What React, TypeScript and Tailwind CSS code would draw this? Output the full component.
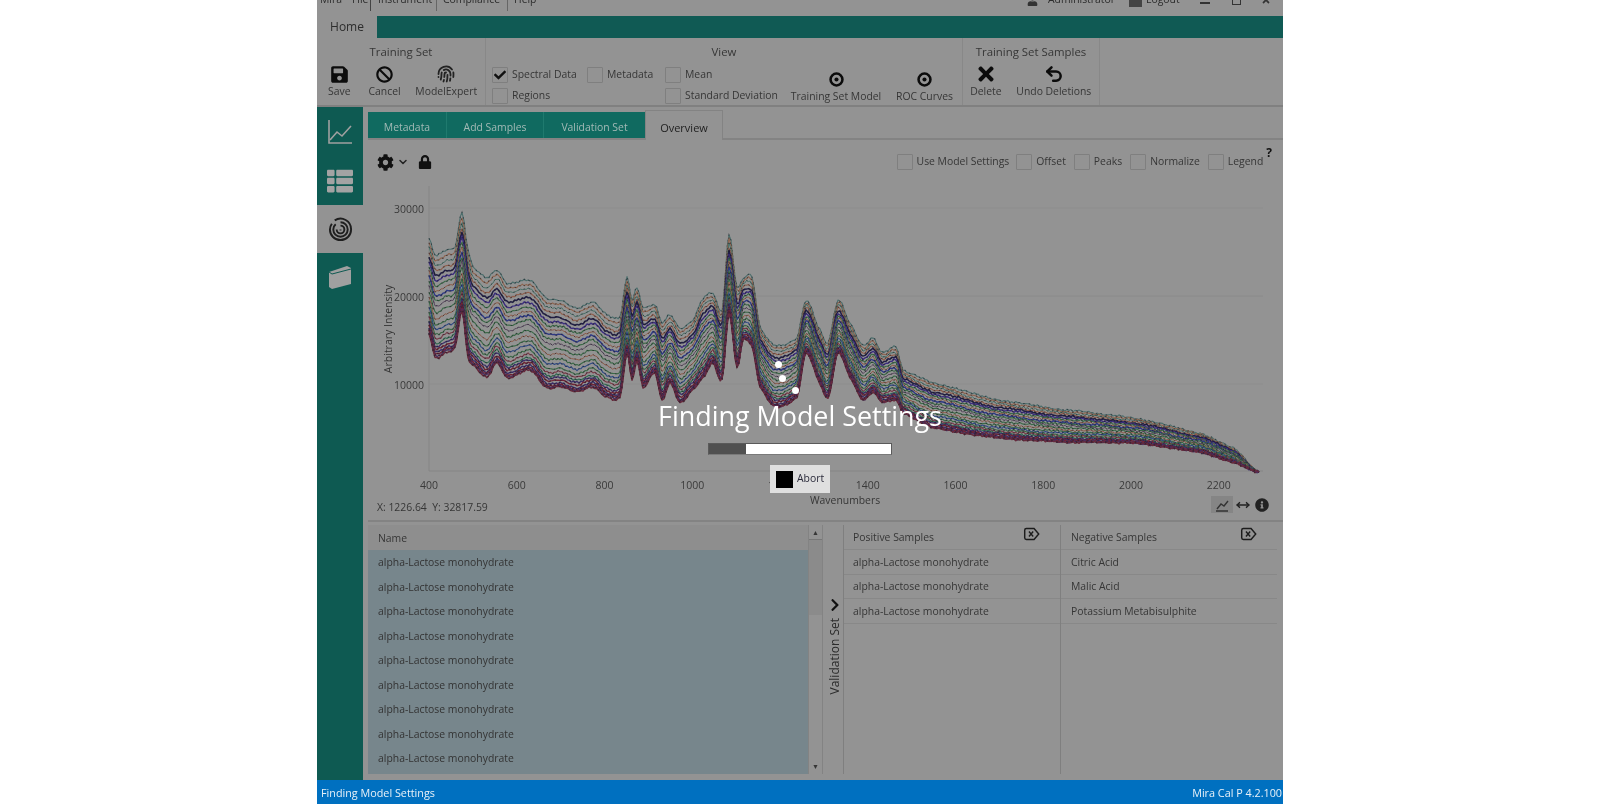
import React from "react";
import { FaSave, FaBan, FaTimes, FaLock, FaThList, FaInfoCircle, FaUser, FaCheck, FaChevronRight, FaCog } from "react-icons/fa";
import { Undo2, ChevronDown, Fingerprint, MoveHorizontal } from "lucide-react";

const env: [number, number, number][] = [
  [429,238,333],[435,255,357],[447,250,352],[455,247,348],[462,213,310],[468,250,357],[473,267,365],[487,278,377],[497,270,363],[507,283,378],[530,280,370],[547,298,388],[560,300,387],[577,308,392],[593,302,387],[607,315,397],[620,317,397],[627,277,353],[632,300,380],[637,288,360],[643,308,387],[655,305,373],[662,323,400],[670,315,383],[680,328,403],[693,320,390],[703,298,378],[713,293,363],[722,310,380],[729,235,313],[737,287,368],[743,278,340],[752,277,347],[760,327,387],[775,345,407],[797,338,397],[806,300,353],[820,330,383],[828,343,398],[838,300,353],[850,323,377],[863,345,400],[873,338,392],[882,352,402],[896,347,400],[903,370,413],[933,383,428],[1000,400,438],[1067,410,442],[1133,418,443],[1200,433,452],[1233,448,462],[1259,472,472],
];

const traces: [number, string, number][] = [
  [0, "#4d6f6d", 1.1], [0.05, "#8f6650", 1.1], [0.1, "#4a7268", 1], [0.15, "#8f5d4a", 1.1], [0.2, "#221f45", 1.5], [0.25, "#3d2f80", 1.4],
  [0.3, "#3b6a47", 1.1], [0.35, "#8f5d4a", 1], [0.4, "#2f3a85", 1.4], [0.45, "#3b6a47", 1.1], [0.5, "#5a4a60", 1], [0.56, "#3b6a47", 1.1],
  [0.62, "#8f5d4a", 1], [0.68, "#3b6a47", 1.1], [0.73, "#2f4a85", 1.1], [0.78, "#3b6a47", 1.1], [0.82, "#7a3a48", 1.1], [0.86, "#2f6a50", 1.1],
  [0.89, "#3d2f6a", 1.3], [0.92, "#702536", 1.4], [0.95, "#3d2f68", 1.4], [0.97, "#6e2436", 1.5], [0.985, "#4a3062", 1.4], [1, "#662a3c", 1.5],
];

function buildPath(t: number, index: number) {
  const pts = env.map(([x, a, b]) => [x, a + (b - a) * t]);
  const parts: string[] = [];
  for (let i = 0; i < pts.length - 1; i++) {
    const p0 = pts[Math.max(i - 1, 0)];
    const p1 = pts[i];
    const p2 = pts[i + 1];
    const p3 = pts[Math.min(i + 2, pts.length - 1)];
    const steps = Math.max(2, Math.round((p2[0] - p1[0]) / 2));
    for (let s = 0; s < steps; s++) {
      const u = s / steps;
      const u2 = u * u;
      const u3 = u2 * u;
      const m1 = (p2[1] - p0[1]) * 0.35;
      const m2 = (p3[1] - p1[1]) * 0.35;
      const y = (2 * u3 - 3 * u2 + 1) * p1[1] + (u3 - 2 * u2 + u) * m1 + (-2 * u3 + 3 * u2) * p2[1] + (u3 - u2) * m2;
      const x = p1[0] + (p2[0] - p1[0]) * u;
      const noise = Math.sin(x * 1.7 + index * 2.3) * 0.7 + Math.sin(x * 0.61 + index) * 0.5 + Math.sin(x * 3.3 + index * 5.1) * 0.4;
      parts.push(`${x.toFixed(1)},${(y + noise).toFixed(1)}`);
    }
  }
  parts.push("1259,472");
  return "M" + parts.join("L");
}

const yTicks: [string, number][] = [["30000", 208], ["20000", 296], ["10000", 384]];
const xTicks = ["400", "600", "800", "1000", "1200", "1400", "1600", "1800", "2000", "2200"];

function Chart() {
  return (
    <svg viewBox="368 176 915 316" className="block w-[915px] h-[316px]">
      {yTicks.map(([l, y]) => (
        <g key={l}>
          <line x1="429" x2="1263" y1={y} y2={y} stroke="#8a8a8a" strokeWidth={y === 296 ? 1 : 0.6} />
          <text x="424" y={y + 5} textAnchor="end" fontSize="10.5" fill="#3a3a3a">{l}</text>
        </g>
      ))}
      <line x1="429" x2="429" y1="186" y2="471" stroke="#858585" />
      <line x1="429" x2="1263" y1="471" y2="471" stroke="#858585" />
      {xTicks.map((l, i) => (
        <text key={l} x={429 + i * 87.75} y="489" textAnchor="middle" fontSize="10.5" fill="#3a3a3a">{l}</text>
      ))}
      <text transform="translate(392 329) rotate(-90)" textAnchor="middle" fontSize="10.5" fill="#333">Arbitrary Intensity</text>
      {traces.map(([t, c, w], i) => {
        const d = buildPath(t, i);
        return (
          <g key={i}>
            <path d={d} fill="none" stroke={c} strokeWidth={w} strokeLinejoin="round" />
            <path d={d} fill="none" stroke="#1c1c24" strokeOpacity="0.55" strokeWidth={w} strokeDasharray="1.5 4" />
          </g>
        );
      })}
    </svg>
  );
}

function Check({ checked }: { checked?: boolean }) {
  return (
    <span className="flex items-center justify-center w-4 h-4 shrink-0 border border-[#7f7f7f] rounded-[1px]">
      {checked && <FaCheck className="text-[#111] text-[12px]" />}
    </span>
  );
}

function Labeled({ label, checked, className }: { label: string; checked?: boolean; className?: string }) {
  return (
    <div className={"flex items-center gap-[4px] " + (className ?? "")}>
      <Check checked={checked} />
      <span className="whitespace-nowrap">{label}</span>
    </div>
  );
}

function Target() {
  return (
    <svg viewBox="0 0 20 20" className="w-[17px] h-[17px]">
      <circle cx="10" cy="10" r="7" fill="none" stroke="#0c0c0c" strokeWidth="3" />
      <circle cx="10" cy="10" r="2.4" fill="#0c0c0c" />
    </svg>
  );
}

function RibbonButton({ icon, label, className }: { icon: React.ReactNode; label: string; className: string }) {
  return (
    <div className={"flex flex-col items-center " + className}>
      <div className="h-[18px] flex items-center justify-center">{icon}</div>
      <span className="whitespace-nowrap leading-[16px]">{label}</span>
    </div>
  );
}

function TagX() {
  return (
    <svg viewBox="0 0 20 16" className="w-[17px] h-[14px]">
      <path d="M4 1.5H13L18.5 8L13 14.5H4Q2 14.5 2 12.5V3.5Q2 1.5 4 1.5Z" fill="none" stroke="#1c1c1c" strokeWidth="1.7" />
      <path d="M7 5L12 11M12 5L7 11" stroke="#1c1c1c" strokeWidth="1.6" />
    </svg>
  );
}

function Sidebar() {
  return (
    <div className="w-[46px] shrink-0 bg-[#0e5a52] flex flex-col">
      <div className="h-[49px] flex items-center justify-center">
        <svg viewBox="0 0 26 26" className="w-[26px] h-[26px]" fill="none" stroke="#a0a0a0" strokeWidth="1.6">
          <path d="M2 1V24H25" />
          <path d="M3 21L10 13L15 17L24 7" />
        </svg>
      </div>
      <div className="h-[49px] flex items-center justify-center">
        <FaThList className="text-[#a3a3a3] text-[26px]" />
      </div>
      <div className="h-[48px] flex items-center justify-center bg-[#939393]">
        <svg viewBox="0 0 26 26" className="w-[25px] h-[25px]" fill="none" stroke="#1f1f1f" strokeWidth="2">
          <path d="M7 3.5A11 11 0 0 1 24 13A11 11 0 0 1 13 24A11 11 0 0 1 2 13A11 11 0 0 1 4 7" />
          <path d="M13 5.5A7.5 7.5 0 0 1 20.5 13A7.5 7.5 0 0 1 13 20.5A7.5 7.5 0 0 1 5.5 13A7 7 0 0 1 8 7.5" />
          <path d="M13 9A4 4 0 0 1 17 13A4 4 0 0 1 13 17A4 4 0 0 1 9 13" />
          <path d="M13 13V14" />
        </svg>
      </div>
      <div className="h-[48px] flex items-center justify-center">
        <svg viewBox="0 0 26 26" className="w-[26px] h-[26px]">
          <path d="M2 8L20 2L24 4V20L5 25L2 23Z" fill="#a0a0a0" />
          <path d="M2 8L5 10L24 5" stroke="#0e5a52" strokeWidth="1" fill="none" />
        </svg>
      </div>
    </div>
  );
}

const leftRows = Array.from({ length: 9 });
const rightRows = [
  ["alpha-Lactose monohydrate", "Citric Acid"],
  ["alpha-Lactose monohydrate", "Malic Acid"],
  ["alpha-Lactose monohydrate", "Potassium Metabisulphite"],
];

export default function App() {
  return (
    <div className="w-full h-[806px] bg-white pl-[317px] overflow-hidden">
      <div className="relative w-[966px] h-[804px] flex flex-col bg-[#939393] text-[#363636] text-[10.4px] font-['Open_Sans',sans-serif] blur-[0.7px]">
        {/* title / menu */}
        <div className="h-[16px] overflow-hidden shrink-0">
          <div className="-mt-[8px] h-[16px] flex items-center pl-[3px] pr-[12px] text-[#2c2c2c]">
            <span className="w-[32px]">Mira</span>
            <span className="w-[18px]">File</span>
            <span className="w-px h-[22px] bg-[#444] mr-[7px]" />
            <span className="w-[52px]">Instrument</span>
            <span className="w-px h-[22px] bg-[#666] mx-[6px]" />
            <span className="w-[58px]">Compliance</span>
            <span className="w-px h-[22px] bg-[#666] mx-[6px]" />
            <span>Help</span>
            <FaUser className="ml-auto mr-[10px] text-[#333] text-[11px]" />
            <span className="w-[70px]">Administrator</span>
            <span className="w-[13px] h-[13px] bg-[#444] ml-[11px] mr-[4px]" />
            <span className="w-[46px]">Logout</span>
            <span className="w-[10px] h-[2px] mt-[6px] bg-[#333] mx-[8px]" />
            <span className="w-[9px] h-[9px] border border-[#333] ml-[14px]" />
            <FaTimes className="ml-[20px] text-[#333] text-[10px]" />
          </div>
        </div>
        {/* ribbon tab bar */}
        <div className="h-[22px] shrink-0 flex bg-[#105a54]">
          <div className="w-[60px] bg-[#939393] flex items-center justify-center text-[12px] text-[#2d2d2d]">Home</div>
        </div>
        {/* ribbon */}
        <div className="h-[69px] shrink-0 flex border-b-2 border-[#808080]">
          <div className="w-[169px] border-r border-[#888] flex flex-col">
            <div className="h-[27px] flex items-center justify-center text-[11.4px]">Training Set</div>
            <div className="flex">
              <RibbonButton className="w-[45px]" label="Save" icon={<FaSave className="text-[#0c0c0c] text-[19px]" />} />
              <RibbonButton className="w-[46px]" label="Cancel" icon={<FaBan className="text-[#0c0c0c] text-[17px]" />} />
              <RibbonButton className="w-[78px]" label="ModelExpert" icon={<Fingerprint className="text-[#222] w-[18px] h-[18px]" strokeWidth={2.4} />} />
            </div>
          </div>
          <div className="w-[477px] border-r border-[#888] flex flex-col">
            <div className="h-[28px] flex items-center justify-center text-[11.4px]">View</div>
            <div className="flex pl-[6px]">
              <div className="w-[298px] grid grid-cols-[95px_78px_125px] gap-y-[4px]">
                <Labeled checked label="Spectral Data" />
                <Labeled label="Metadata" />
                <Labeled label="Mean" />
                <Labeled label="Regions" />
                <span />
                <Labeled label="Standard Deviation" />
              </div>
              <div className="flex mt-[4px]">
                <RibbonButton className="w-[92px]" label="Training Set Model" icon={<Target />} />
                <RibbonButton className="w-[85px]" label="ROC Curves" icon={<Target />} />
              </div>
            </div>
          </div>
          <div className="w-[137px] border-r border-[#888] flex flex-col">
            <div className="h-[27px] flex items-center justify-center text-[11.4px]">Training Set Samples</div>
            <div className="flex">
              <RibbonButton className="w-[46px]" label="Delete" icon={<FaTimes className="text-[#0c0c0c] text-[22px]" />} />
              <RibbonButton className="w-[91px]" label="Undo Deletions" icon={<Undo2 className="text-[#0c0c0c] w-[20px] h-[20px]" strokeWidth={3} />} />
            </div>
          </div>
        </div>
        {/* body */}
        <div className="flex-1 min-h-0 flex">
          <Sidebar />
          <div className="flex-1 min-w-0 flex flex-col pl-[5px]">
            <div className="h-[33px] shrink-0 flex items-end border-b-2 border-[#838383]">
              <div className="h-[26px] w-[79px] pt-[6px] bg-[#106a60] flex items-center justify-center text-[#a3bab6] border-r border-[#1f7a6e]">Metadata</div>
              <div className="h-[26px] w-[97px] pt-[6px] bg-[#106a60] flex items-center justify-center text-[#a3bab6] border-r border-[#1f7a6e]">Add Samples</div>
              <div className="h-[26px] w-[101px] pt-[6px] bg-[#106a60] flex items-center justify-center text-[#a3bab6]">Validation Set</div>
              <div className="h-[30px] w-[78px] pt-[5px] -mb-[2px] bg-[#939393] border-x border-t border-[#838383] flex items-center justify-center text-[#222] text-[11px]">Overview</div>
            </div>
            <div className="h-[36px] shrink-0 flex items-center pt-[8px] pl-[9px] pr-[11px]">
              <FaCog className="text-[#111] text-[17px]" />
              <ChevronDown className="text-[#222] w-[12px] h-[12px] ml-[3px]" strokeWidth={3} />
              <FaLock className="text-[#111] text-[14px] ml-[9px]" />
              <div className="ml-auto flex items-center">
                <Labeled className="mr-[7px]" label="Use Model Settings" />
                <Labeled className="mr-[8px]" label="Offset" />
                <Labeled className="mr-[8px]" label="Peaks" />
                <Labeled className="mr-[8px]" label="Normalize" />
                <Labeled label="Legend" />
                <span className="self-start ml-[3px] -mt-[10px] font-bold text-[#111] text-[12px]">?</span>
              </div>
            </div>
            <Chart />
            <div className="h-[30px] shrink-0 flex border-b-2 border-[#838383]">
              <div className="w-[442px] pl-[9px] pt-[8px] whitespace-nowrap">X: 1226.64 &nbsp;Y: 32817.59</div>
              <div className="leading-[16px]">Wavenumbers</div>
              <div className="ml-auto mr-[14px] mt-[4px] flex items-center h-[17px]">
                <div className="w-[22px] h-[17px] bg-[#858585] flex items-center justify-center">
                  <svg viewBox="0 0 14 14" className="w-[14px] h-[14px]" fill="none" stroke="#333" strokeWidth="1.4">
                    <path d="M1 13H13M2 11L6 6L9 8L13 3" />
                  </svg>
                </div>
                <MoveHorizontal className="mx-[3px] w-[14px] h-[14px] text-[#222]" strokeWidth={2.6} />
                <FaInfoCircle className="ml-[2px] text-[14px] text-[#222]" />
              </div>
            </div>
            <div className="flex pt-[3px] h-[252px] shrink-0">
              <div className="w-[440px] flex flex-col bg-[#77868c]">
                <div className="h-[25px] shrink-0 pt-[2px] bg-[#8e8e8e] flex items-center pl-[10px]">Name</div>
                {leftRows.map((_, i) => (
                  <div key={i} className="h-[24.5px] shrink-0 pt-[2px] flex items-center pl-[10px] text-[#333]">alpha-Lactose monohydrate</div>
                ))}
              </div>
              <div className="w-[15px] flex flex-col items-center border-x border-[#838383]">
                <div className="h-[15px] w-full border-b border-[#777] flex items-center justify-center text-[7px] leading-none">▲</div>
                <div className="w-full h-[75px] bg-[#8b8b8b]" />
                <div className="mt-auto h-[15px] flex items-center justify-center text-[7px] leading-none">▼</div>
              </div>
              <div className="w-[17px] ml-[3px] flex flex-col items-center pt-[73px]">
                <FaChevronRight className="text-[#111] text-[14px]" />
                <span className="mt-[6px] [writing-mode:vertical-rl] rotate-180 text-[#2b2b2b] text-[12px] whitespace-nowrap">Validation Set</span>
              </div>
              <div className="flex-1 min-w-0 grid grid-cols-[217px_216px] border-l border-[#7f7f7f] mr-[7px]">
                <div className="border-r border-[#7f7f7f] flex flex-col">
                  <div className="h-[25px] pt-[2px] border-b border-[#888] flex items-center justify-between pl-[9px] pr-[20px]">
                    <span>Positive Samples</span>
                    <span className="-mt-[9px]"><TagX /></span>
                  </div>
                  {rightRows.map((r, i) => (
                    <div key={i} className="h-[24.5px] pt-[2px] border-b border-[#888] flex items-center pl-[9px]">{r[0]}</div>
                  ))}
                </div>
                <div className="flex flex-col">
                  <div className="h-[25px] pt-[2px] border-b border-[#888] flex items-center justify-between pl-[10px] pr-[20px]">
                    <span>Negative Samples</span>
                    <span className="-mt-[9px]"><TagX /></span>
                  </div>
                  {rightRows.map((r, i) => (
                    <div key={i} className="h-[24.5px] pt-[2px] border-b border-[#888] flex items-center pl-[10px]">{r[1]}</div>
                  ))}
                </div>
              </div>
            </div>
          </div>
        </div>
        {/* status bar */}
        <div className="h-[24px] shrink-0 bg-[#0070c0] flex items-center justify-between pl-[4px] pr-[1px] pt-[2px] text-[#e8f1f8] text-[10.8px]">
          <span>Finding Model Settings</span>
          <span>Mira Cal P 4.2.100</span>
        </div>
        {/* busy overlay */}
        <div className="absolute inset-x-0 top-0 h-[780px] flex flex-col items-center pt-[398px]">
          <span className="absolute left-[458px] top-[361px] w-[7px] h-[7px] rounded-full bg-white" />
          <span className="absolute left-[462px] top-[375px] w-[7px] h-[7px] rounded-full bg-white" />
          <span className="absolute left-[475px] top-[387px] w-[7px] h-[7px] rounded-full bg-white" />
          <div className="text-[26.9px] leading-[36px] text-white whitespace-nowrap">Finding Model Settings</div>
          <div className="mt-[9px] w-[184px] h-[12px] flex bg-white border border-[#5a5a5a] border-b-[#7a7a7a]">
            <div className="w-[37px] bg-[#505050]" />
          </div>
          <div className="mt-[10px] w-[60px] h-[28px] bg-[#dfdfdf] flex items-center pl-[6px] gap-[4px] text-[#2b2b3b]">
            <span className="w-[17px] h-[17px] bg-black" />
            <span>Abort</span>
          </div>
        </div>
      </div>
    </div>
  );
}
